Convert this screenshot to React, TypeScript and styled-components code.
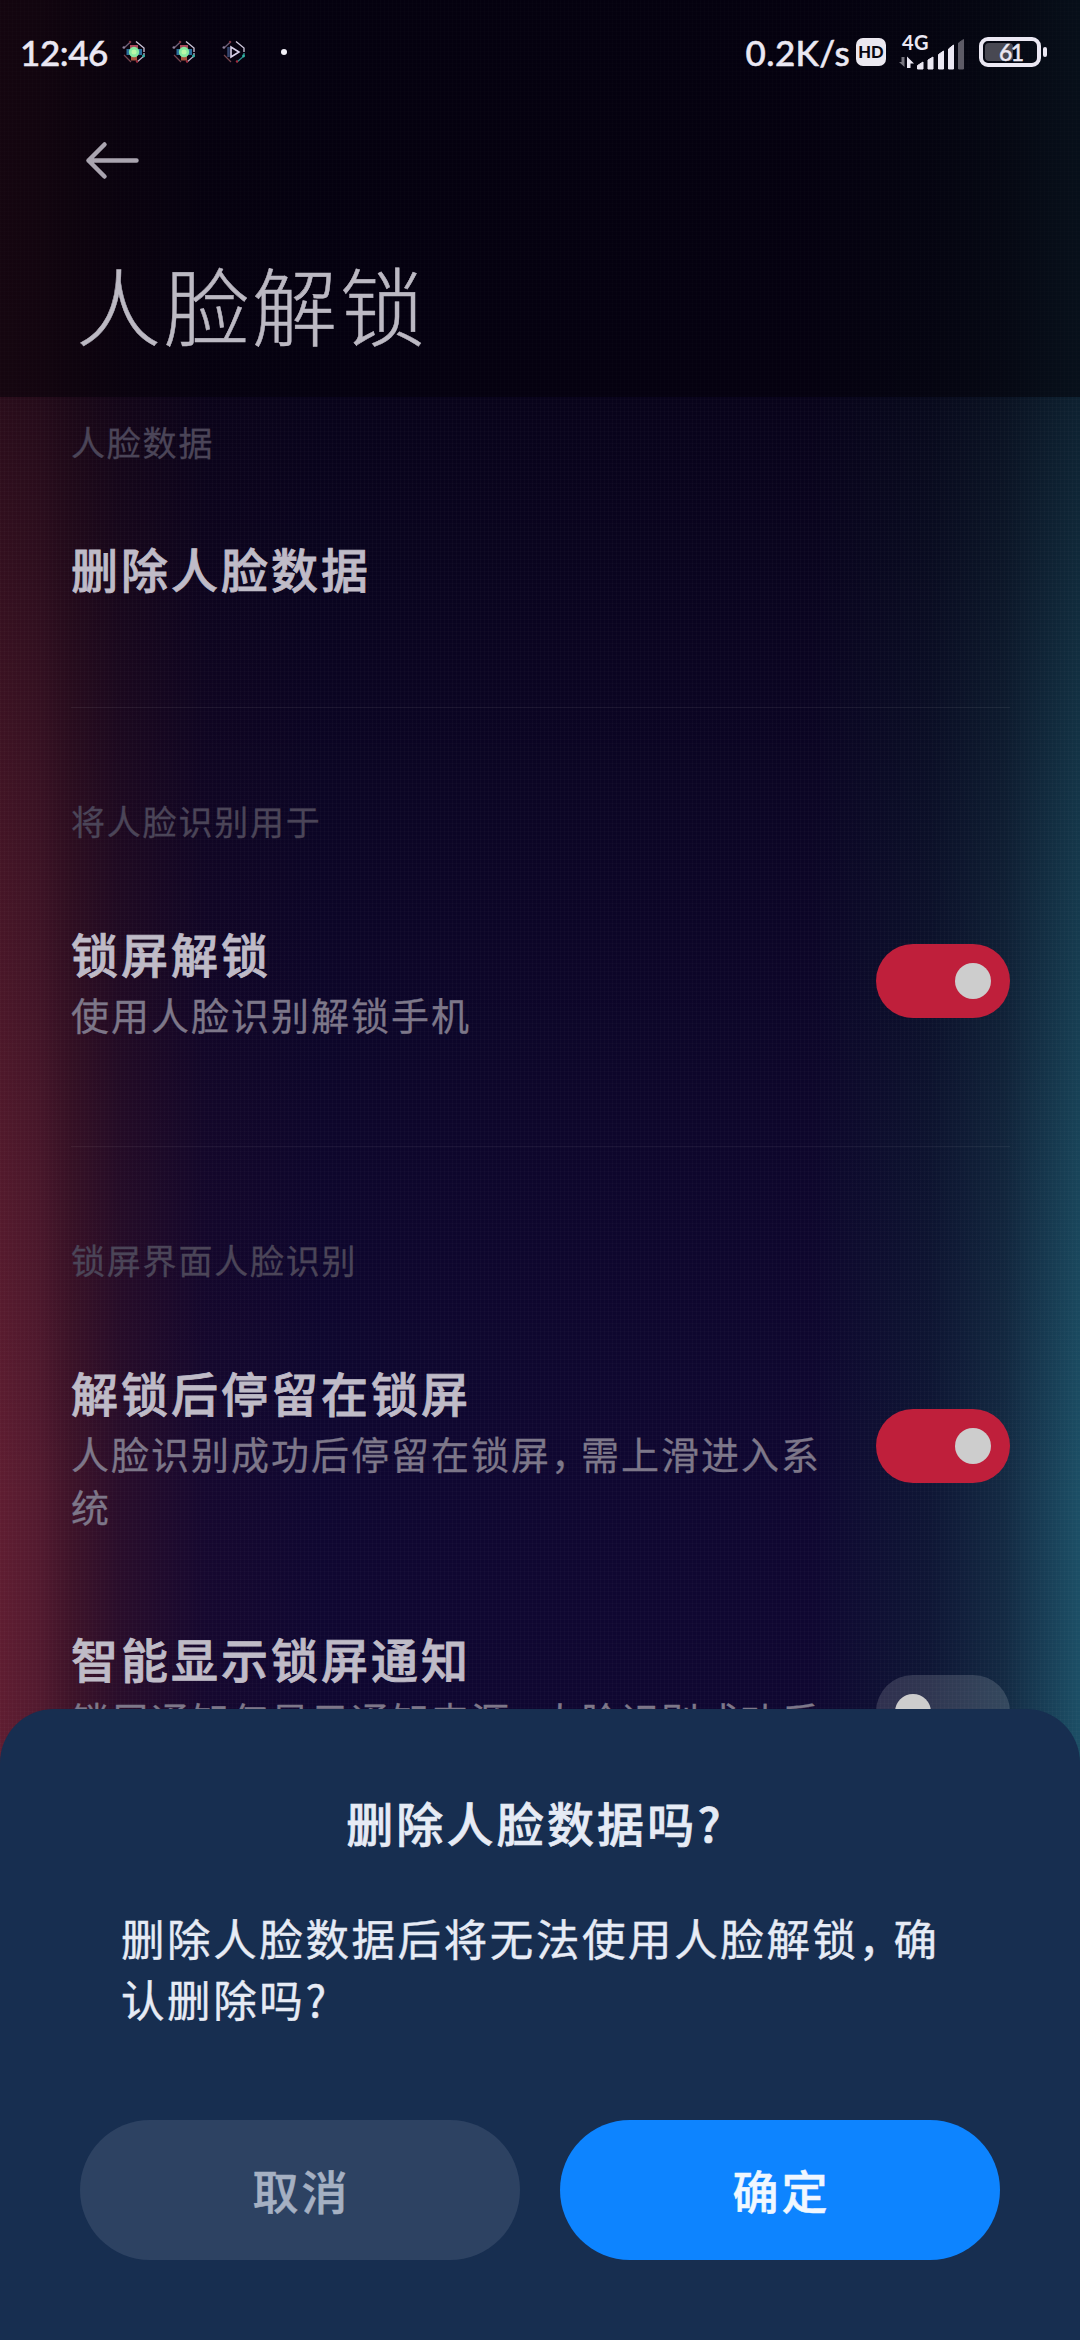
import React from 'react';
import styled, { createGlobalStyle } from 'styled-components';

const Global = createGlobalStyle`
  * { box-sizing: border-box; }
  html, body { margin: 0; padding: 0; background: #05010f; }
  body { font-family: "Noto Sans CJK SC", sans-serif; }
  h1, h2, h3, p { margin: 0; }
  button { border: 0; padding: 0; font-family: inherit; }
`;

const Screen = styled.main`
  position: relative;
  width: 1080px;
  height: 2340px;
  overflow: hidden;
  display: flex;
  flex-direction: column;
  background:
    repeating-linear-gradient(90deg, rgba(255, 255, 255, 0.02) 0 1px, transparent 1px 4px),
    repeating-linear-gradient(0deg, rgba(255, 255, 255, 0.014) 0 1px, transparent 1px 4px),
    linear-gradient(180deg, rgba(3, 0, 10, 0.62) 0, rgba(3, 0, 10, 0.58) 400px, rgba(3, 0, 10, 0.32) 800px, rgba(3, 0, 10, 0.14) 1150px, transparent 1500px),
    linear-gradient(90deg, transparent 75%, rgba(14, 34, 56, 0.55) 86%, rgba(20, 48, 70, 0.85) 93%, #1c4f66 100%),
    linear-gradient(90deg, #5f1d31 0, #531a2f 3.5%, rgba(66, 20, 40, 0.92) 6.5%, rgba(50, 15, 40, 0.74) 11%, rgba(32, 9, 44, 0.4) 19%, transparent 30%),
    #0f0731;
`;

const Header = styled.header`
  height: 397px;
  flex: none;
  background: rgba(2, 0, 6, 0.5);
`;

const StatusBar = styled.div`
  height: 104px;
  padding: 0 33px 0 20px;
  display: flex;
  align-items: center;
  justify-content: space-between;
  color: #ebe8f3;
  font-family: Lato, sans-serif;
  font-weight: 500;
`;

const StatusGroup = styled.div`
  display: flex;
  align-items: center;
`;

const StatusText = styled.span<{ $spacing: number }>`
  font-size: 35px;
  line-height: 42px;
  letter-spacing: ${(p) => p.$spacing}px;
  -webkit-text-stroke: 0.5px currentColor;
`;

const Notifications = styled.div`
  display: flex;
  align-items: center;
  gap: 26px;
  margin-left: 14px;
`;

const MoreDot = styled.i`
  width: 6px;
  height: 6px;
  margin-left: 9px;
  border-radius: 50%;
  background: #f3f1f8;
`;

const HdBadge = styled.span`
  width: 30px;
  height: 28px;
  margin: 0 13px 0 6px;
  border-radius: 7px;
  background: #ebe8f0;
  color: #08060f;
  font-size: 16.5px;
  font-weight: 900;
  line-height: 29px;
  text-align: center;
`;

const Signal = styled.div`
  width: 68px;
  height: 52px;
  margin: 0 12px 0 0;
`;

const Battery = styled.div`
  display: flex;
  align-items: center;
  gap: 2px;
`;

const BatteryBody = styled.div`
  position: relative;
  width: 62px;
  height: 30px;
  padding: 2px;
  border: 4px solid #ebe8f3;
  border-radius: 9px;
`;

const BatteryFill = styled.div`
  width: 28px;
  height: 18px;
  border-radius: 4px;
  background: #484852;
`;

const BatteryLevel = styled.span`
  position: absolute;
  left: 16px;
  top: -2px;
  font-size: 23px;
  line-height: 26px;
  letter-spacing: -1.5px;
  -webkit-text-stroke: 0.4px currentColor;
`;

const BatteryTip = styled.div`
  width: 4px;
  height: 10px;
  border-radius: 2px;
  background: #ebe8f3;
`;

const BackButton = styled.button`
  display: block;
  margin: 36px 0 0 84px;
  background: none;
  line-height: 0;
`;

const PageTitle = styled.h1`
  margin: 73px 0 0 76px;
  font-size: 85px;
  line-height: 100px;
  font-weight: 300;
  letter-spacing: 3px;
  color: #bcb9c3;
  -webkit-text-stroke: 0.5px currentColor;
`;

const Group = styled.section<{ $first?: boolean; $last?: boolean }>`
  flex: none;
  margin: 0 70px 0 71px;
  padding: ${(p) => (p.$first ? 20 : 88)}px 0 ${(p) => (p.$first ? 59 : 60)}px;
  border-bottom: ${(p) => (p.$last ? 0 : 1)}px solid rgba(255, 255, 255, 0.06);
`;

const GroupLabel = styled.h2<{ $gap: number }>`
  margin-bottom: ${(p) => p.$gap}px;
  font-size: 34px;
  line-height: 50px;
  font-weight: 400;
  letter-spacing: 1.8px;
  color: #4b4558;
  -webkit-text-stroke: 0.3px currentColor;
`;

const Row = styled.div`
  display: flex;
  align-items: center;
  gap: 40px;
  padding: 45px 0;
`;

const RowText = styled.div`
  flex: 1;
  min-width: 0;
`;

const RowTitle = styled.h3`
  font-size: 47px;
  line-height: 70px;
  font-weight: 500;
  letter-spacing: 3px;
  color: #bfbbc7;
  -webkit-text-stroke: 0.8px currentColor;
`;

const RowSummary = styled.p`
  margin-top: -1px;
  padding-bottom: 1px;
  font-size: 38px;
  line-height: 53px;
  letter-spacing: 2px;
  color: #7d7789;
  -webkit-text-stroke: 0.3px currentColor;
`;

const Comma = styled.span<{ $tighten: number }>`
  letter-spacing: ${(p) => -p.$tighten}px;
`;

const Switch = styled.button<{ $on: boolean }>`
  flex: none;
  display: flex;
  align-items: center;
  justify-content: ${(p) => (p.$on ? 'flex-end' : 'flex-start')};
  width: 134px;
  height: 74px;
  margin-top: 2px;
  padding: 0 19px;
  border-radius: 37px;
  background: ${(p) => (p.$on ? '#bf1f3b' : 'rgba(255, 255, 255, 0.14)')};
`;

const Knob = styled.span`
  width: 36px;
  height: 36px;
  border-radius: 50%;
  background: #cdcdcd;
`;

const Sheet = styled.div`
  position: absolute;
  left: 0;
  right: 0;
  bottom: 0;
  height: 631px;
  padding: 78px 80px 0;
  border-radius: 54px 54px 0 0;
  background: #172e50;
`;

const SheetTitle = styled.h2`
  padding-right: 10px;
  text-align: center;
  font-size: 47px;
  line-height: 70px;
  font-weight: 500;
  letter-spacing: 3.2px;
  color: #e6ebf5;
  -webkit-text-stroke: 0.7px currentColor;
`;

const SheetMessage = styled.p`
  margin: 50px 40px 0 41px;
  font-size: 43.5px;
  line-height: 61px;
  letter-spacing: 2.6px;
  color: #e6ebf5;
  -webkit-text-stroke: 0.4px currentColor;
`;

const Actions = styled.div`
  display: flex;
  gap: 40px;
  margin-top: 91px;
`;

const Action = styled.button<{ $primary?: boolean }>`
  flex: 1;
  height: 140px;
  padding: 0 0 3px 3px;
  border-radius: 70px;
  font-size: 46px;
  line-height: 68px;
  font-weight: 500;
  letter-spacing: 3px;
  color: ${(p) => (p.$primary ? '#f0f7ff' : '#a5b0c2')};
  background: ${(p) => (p.$primary ? '#0d84ff' : '#2d4262')};
  -webkit-text-stroke: 0.5px currentColor;
`;

function AppIcon({ play = false }: { play?: boolean }) {
  return (
    <svg width="24" height="24" viewBox="0 0 24 24" fill="none" strokeWidth="1.3">
      <path d="M2 8L9 1.5" stroke="#6f5f78" />
      <path d="M14 1.5L22 8V12" stroke="#cfc8dc" />
      <path d="M22 13V16L15 22" stroke={play ? '#2d8f8c' : '#b9b4c8'} />
      <path d="M2 15L9 22" stroke="#75464f" />
      <circle cx="1.8" cy="7.5" r="1.3" fill="#8c7f98" />
      <circle cx="8" cy="2" r="1.2" fill="#7e3644" />
      <circle cx="21.5" cy="16" r="1.4" fill="#2fb3a4" />
      <circle cx="15" cy="21.5" r="1.2" fill="#a02a3c" />
      {play ? (
        <>
          <path d="M6.5 7V17" stroke="#35466f" strokeWidth="2.5" />
          <path d="M9 7V17L17 12Z" stroke="#d9d2ea" strokeWidth="1.6" />
        </>
      ) : (
        <>
          <path d="M8 6.5H16" stroke="#a84a5c" strokeWidth="3" />
          <path d="M4.5 12H20" stroke="#2a6f9c" strokeWidth="6" />
          <path d="M9 18H15" stroke="#a8543f" strokeWidth="5" />
          <circle cx="12" cy="12" r="5.2" fill="#86e8a0" />
          <circle cx="12" cy="12" r="2.5" fill="#b9f7a8" />
        </>
      )}
    </svg>
  );
}

function SignalIcon() {
  return (
    <svg width="68" height="52" viewBox="0 -8 68 52" fill="#ebe8f3">
      <text x="3" y="15.5" fontFamily="Lato, sans-serif" fontSize="20" fontWeight="700" letterSpacing="0.5">4G</text>
      <path d="M5.5 23V33L0 28H2.500V23Z" fill="#77757f" />
      <path d="M8 34V22.500L15 29.500H11.500V34Z" />
      <path d="M18.500 35V31.5L24 28V35Z" stroke="#ebe8f3" strokeLinejoin="round" />
      <path d="M29 35V26L34 23V35Z" stroke="#ebe8f3" strokeLinejoin="round" />
      <path d="M39.500 35V20.500L44.500 17V35Z" stroke="#ebe8f3" strokeLinejoin="round" />
      <path d="M49.500 35V15L54.500 11V35Z" stroke="#ebe8f3" strokeLinejoin="round" />
      <path d="M59.500 35V9L64.500 5.500V35Z" fill="#5d5b66" stroke="#5d5b66" strokeLinejoin="round" />
    </svg>
  );
}

function BackArrow() {
  return (
    <svg width="58" height="40" viewBox="0 0 58 40" fill="none" stroke="#aaa5b0" strokeWidth="4.5" strokeLinecap="round" strokeLinejoin="round">
      <path d="M4.500 20.500H52.500M20.500 4.500L4.500 20.500L20.500 36.500" />
    </svg>
  );
}

function Setting({ title, summary, on }: { title: string; summary?: React.ReactNode; on?: boolean }) {
  return (
    <Row>
      <RowText>
        <RowTitle>{title}</RowTitle>
        {summary && <RowSummary>{summary}</RowSummary>}
      </RowText>
      {on !== undefined && (
        <Switch $on={on} role="switch" aria-checked={on}>
          <Knob />
        </Switch>
      )}
    </Row>
  );
}

export default function App() {
  return (
    <>
      <Global />
      <Screen>
        <Header>
          <StatusBar>
            <StatusGroup>
              <StatusText $spacing={-0.4}>12:46</StatusText>
              <Notifications>
                <AppIcon />
                <AppIcon />
                <AppIcon play />
                <MoreDot />
              </Notifications>
            </StatusGroup>
            <StatusGroup>
              <StatusText $spacing={0.4}>0.2K/s</StatusText>
              <HdBadge>HD</HdBadge>
              <Signal>
                <SignalIcon />
              </Signal>
              <Battery>
                <BatteryBody>
                  <BatteryFill />
                  <BatteryLevel>61</BatteryLevel>
                </BatteryBody>
                <BatteryTip />
              </Battery>
            </StatusGroup>
          </StatusBar>
          <BackButton aria-label="返回">
            <BackArrow />
          </BackButton>
          <PageTitle>人脸解锁</PageTitle>
        </Header>

        <Group $first>
          <GroupLabel $gap={21}>人脸数据</GroupLabel>
          <Setting title="删除人脸数据" />
        </Group>

        <Group>
          <GroupLabel $gap={27}>将人脸识别用于</GroupLabel>
          <Setting title="锁屏解锁" summary="使用人脸识别解锁手机" on />
        </Group>

        <Group $last>
          <GroupLabel $gap={27}>锁屏界面人脸识别</GroupLabel>
          <Setting
            title="解锁后停留在锁屏"
            summary={<>人脸识别成功后停留在锁屏<Comma $tighten={8}>，</Comma>需上滑进入系统</>}
            on
          />
          <Setting
            title="智能显示锁屏通知"
            summary={<>锁屏通知仅显示通知来源<Comma $tighten={8}>，</Comma>人脸识别成功后显示通知内容</>}
            on={false}
          />
        </Group>

        <Sheet role="dialog">
          <SheetTitle>删除人脸数据吗?</SheetTitle>
          <SheetMessage>
            删除人脸数据后将无法使用人脸解锁<Comma $tighten={8.5}>，</Comma>确认删除吗?
          </SheetMessage>
          <Actions>
            <Action>取消</Action>
            <Action $primary>确定</Action>
          </Actions>
        </Sheet>
      </Screen>
    </>
  );
}
